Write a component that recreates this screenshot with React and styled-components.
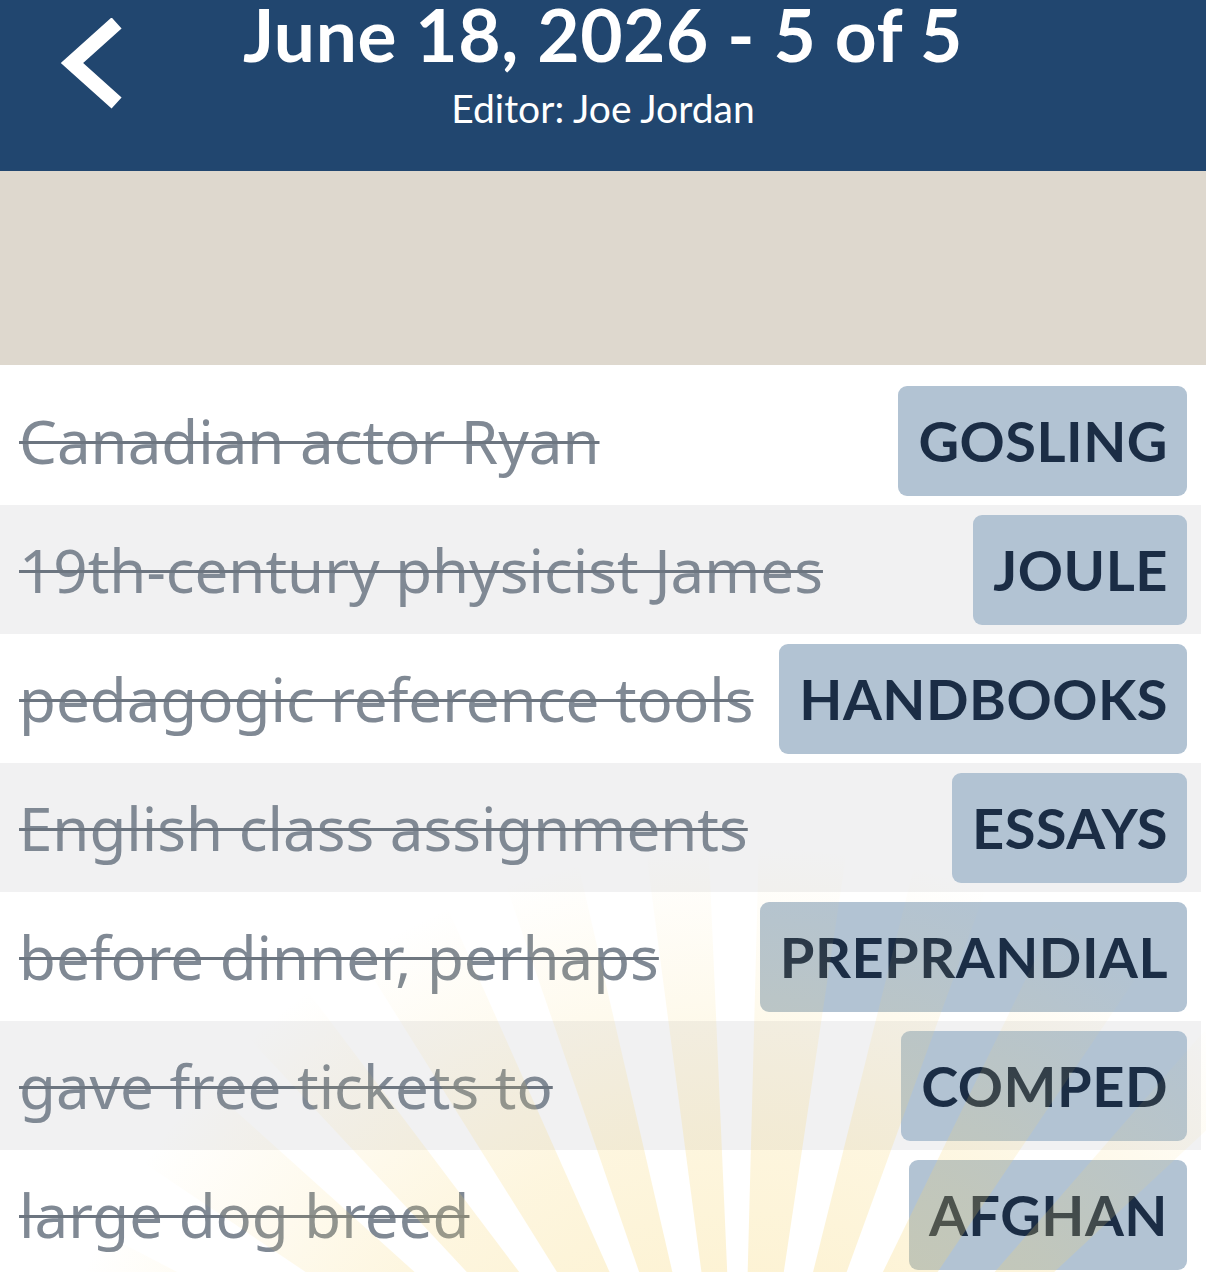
import React from 'react'
import styled, { createGlobalStyle } from 'styled-components'

const GlobalStyle = createGlobalStyle`
  html, body {
    margin: 0;
    padding: 0;
    background: #ffffff;
  }
  body {
    font-family: 'Lato', 'Noto Sans', sans-serif;
  }
`

const Page = styled.div`
  width: 1206px;
  height: 1272px;
  overflow: hidden;
  background: #ffffff;
`

const Header = styled.header`
  height: 171px;
  background: #21466f;
  display: grid;
  grid-template-columns: 1fr auto 1fr;
  align-items: start;
  color: #ffffff;
`

const BackButton = styled.button`
  justify-self: start;
  margin: 18px 0 0 54px;
  padding: 0;
  border: none;
  background: none;
  width: 76px;
  height: 96px;
  cursor: pointer;
`

const TitleBlock = styled.div`
  display: flex;
  flex-direction: column;
  align-items: center;
  padding-top: 2px;
`

const Title = styled.h1`
  margin: 0;
  font-family: 'Lato', sans-serif;
  font-weight: 700;
  font-size: 73px;
  line-height: 64px;
  letter-spacing: 0.6px;
  white-space: nowrap;
`

const Subtitle = styled.div`
  margin-top: 20px;
  font-family: 'Lato', sans-serif;
  font-size: 39px;
  line-height: 44px;
`

const Banner = styled.div`
  height: 194px;
  background: #ded8ce;
`

const List = styled.div`
  position: relative;
  padding-top: 11px;
`

const Row = styled.div`
  height: 129px;
  width: 1201px;
  box-sizing: border-box;
  background: ${p => (p.$shaded ? '#f1f1f2' : '#ffffff')};
  display: flex;
  align-items: center;
  justify-content: space-between;
  padding: 0 14px 0 19px;
`

const Clue = styled.span`
  font-family: 'Noto Sans', sans-serif;
  font-size: 60px;
  color: #808994;
  text-decoration: line-through;
  text-decoration-color: #6c7580;
  text-decoration-thickness: 3px;
  white-space: nowrap;
`

const Answer = styled.span`
  height: 110px;
  box-sizing: border-box;
  display: flex;
  align-items: center;
  padding: 0 19px 0 20px;
  border-radius: 9px;
  background: #b2c3d3;
  color: #1b2d45;
  font-family: 'Lato', sans-serif;
  font-weight: 700;
  font-size: 56px;
  letter-spacing: 0.5px;
  white-space: nowrap;
`

const Rays = styled.svg`
  position: absolute;
  left: 0;
  top: 0;
  width: 1206px;
  height: 907px;
  pointer-events: none;
`

const clues = [
  ['Canadian actor Ryan', 'GOSLING'],
  ['19th-century physicist James', 'JOULE'],
  ['pedagogic reference tools', 'HANDBOOKS'],
  ['English class assignments', 'ESSAYS'],
  ['before dinner, perhaps', 'PREPRANDIAL'],
  ['gave free tickets to', 'COMPED'],
  ['large dog breed', 'AFGHAN'],
]

// ray angles in degrees from straight up, with half-widths
const rays = [
  [-66, 3.5], [-52, 4], [-40, 3], [-28, 4], [-16, 3], [-5, 2.5], [5, 3.5], [17, 3], [30, 4], [44, 3],
]

const cx = 740
const cy = 1200

const rayPoints = (angle, half) => {
  const r = 1400
  const toXY = a => {
    const rad = (a * Math.PI) / 180
    return `${cx + Math.sin(rad) * r},${cy - Math.cos(rad) * r}`
  }
  return `${cx},${cy} ${toXY(angle - half)} ${toXY(angle + half)}`
}

const App = () => {
  return (
    <Page>
      <GlobalStyle />
      <Header>
        <BackButton aria-label="Back">
          <svg width="76" height="96" viewBox="0 0 76 96">
            <path d="M57 10 L18 45 L57 80" fill="none" stroke="#ffffff" strokeWidth="15" strokeLinecap="square" strokeLinejoin="miter" />
          </svg>
        </BackButton>
        <TitleBlock>
          <Title>June 18, 2026 - 5 of 5</Title>
          <Subtitle>Editor: Joe Jordan</Subtitle>
        </TitleBlock>
        <div />
      </Header>
      <Banner />
      <List>
        {clues.map(([clue, answer], i) => (
          <Row key={answer} $shaded={i % 2 === 1}>
            <Clue>{clue}</Clue>
            <Answer>{answer}</Answer>
          </Row>
        ))}
        <Rays viewBox="0 0 1206 907">
          <defs>
            <radialGradient id="glow" gradientUnits="userSpaceOnUse" cx={cx} cy={cy} r="720">
              <stop offset="0" stopColor="#f7d46a" stopOpacity="0.42" />
              <stop offset="0.6" stopColor="#f7d46a" stopOpacity="0.22" />
              <stop offset="1" stopColor="#f7d46a" stopOpacity="0" />
            </radialGradient>
          </defs>
          {rays.map(([a, h]) => (
            <polygon key={a} points={rayPoints(a, h)} fill="url(#glow)" />
          ))}
        </Rays>
      </List>
    </Page>
  )
}

export default App
